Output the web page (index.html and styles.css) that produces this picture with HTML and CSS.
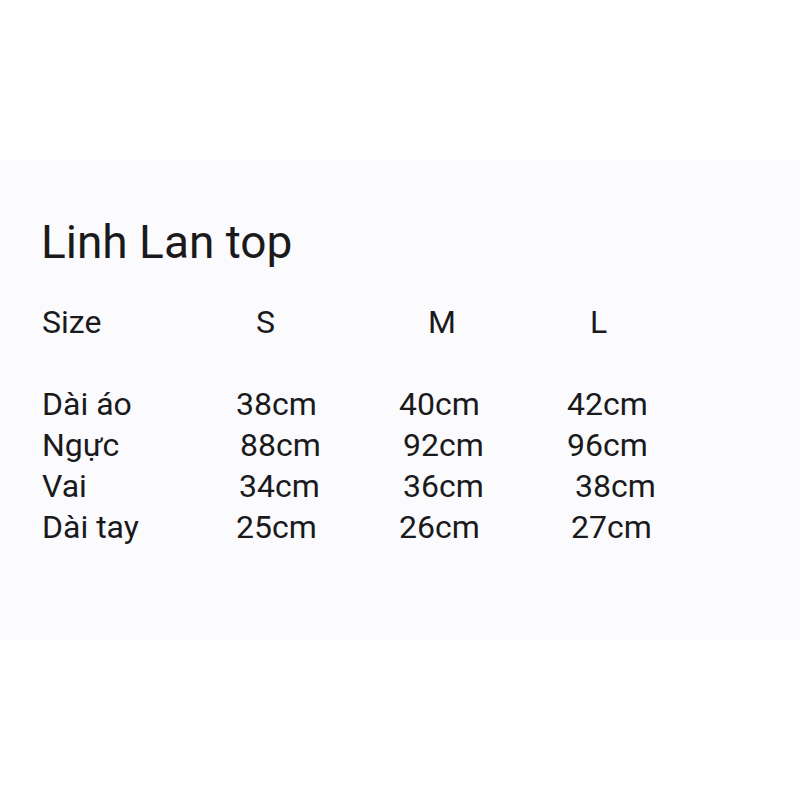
FILE: index.html
```html
<!DOCTYPE html>
<html lang="vi">
<head>
<meta charset="utf-8">
<title>Linh Lan top</title>
<link rel="stylesheet" href="styles.css">
</head>
<body>
<section class="panel">
  <h1 class="title">Linh Lan top</h1>
  <div class="table">
    <div class="cell">Size</div>
    <div class="cell o20">S</div>
    <div class="cell o29">M</div>
    <div class="cell o23">L</div>

    <div class="cell blank">&nbsp;</div>
    <div class="cell blank"></div>
    <div class="cell blank"></div>
    <div class="cell blank"></div>

    <div class="cell">Dài áo</div>
    <div class="cell">38cm</div>
    <div class="cell">40cm</div>
    <div class="cell">42cm</div>

    <div class="cell">Ngực</div>
    <div class="cell o4">88cm</div>
    <div class="cell o4">92cm</div>
    <div class="cell">96cm</div>

    <div class="cell">Vai</div>
    <div class="cell o3">34cm</div>
    <div class="cell o4">36cm</div>
    <div class="cell o8">38cm</div>

    <div class="cell">Dài tay</div>
    <div class="cell">25cm</div>
    <div class="cell">26cm</div>
    <div class="cell o4">27cm</div>
  </div>
</section>
</body>
</html>
```
FILE: styles.css
```css
html, body {
  margin: 0;
  padding: 0;
  background: #ffffff;
}
body {
  font-family: Roboto, "Liberation Sans", sans-serif;
  color: #1a1a1c;
}
.panel {
  margin-top: 160px;
  height: 480px;
  box-sizing: border-box;
  background: #fbfbfd;
  padding: 54px 0 0 42px;
}
.title {
  margin: 0 0 0 -1px;
  font-size: 46px;
  line-height: 56px;
  font-weight: 400;
}
.table {
  margin-top: 32px;
  display: grid;
  grid-template-columns: 194px 163px 168px auto;
  font-size: 32px;
  line-height: 41px;
}
.cell { white-space: nowrap; }
.o3 { padding-left: 3px; }
.o4 { padding-left: 4px; }
.o8 { padding-left: 8px; }
.o20 { padding-left: 20px; }
.o23 { padding-left: 23px; }
.o29 { padding-left: 29px; }
```
